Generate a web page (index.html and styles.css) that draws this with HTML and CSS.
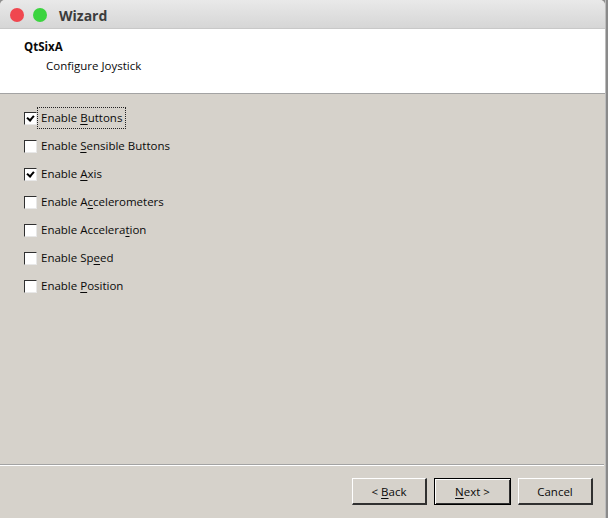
FILE: index.html
```html
<!DOCTYPE html>
<html>
<head>
<meta charset="utf-8">
<link rel="stylesheet" href="styles.css">
</head>
<body>
<div class="screen">
  <div class="window">
    <div class="titlebar">
      <span class="dot red"></span>
      <span class="dot green"></span>
      <span class="title">Wizard</span>
    </div>
    <div class="header">
      <div class="h-title">QtSixA</div>
      <div class="h-sub">Configure Joystick</div>
    </div>
    <div class="content">
      <div class="options">
        <label class="opt"><span class="box checked"></span><span class="lbl focus">Enable <u>B</u>uttons</span></label>
        <label class="opt"><span class="box"></span><span class="lbl">Enable <u>S</u>ensible Buttons</span></label>
        <label class="opt"><span class="box checked"></span><span class="lbl">Enable <u>A</u>xis</span></label>
        <label class="opt"><span class="box"></span><span class="lbl">Enable A<u>c</u>celerometers</span></label>
        <label class="opt"><span class="box"></span><span class="lbl">Enable Accelera<u>t</u>ion</span></label>
        <label class="opt"><span class="box"></span><span class="lbl">Enable Sp<u>e</u>ed</span></label>
        <label class="opt"><span class="box"></span><span class="lbl">Enable <u>P</u>osition</span></label>
      </div>
      <div class="sep"></div>
      <div class="buttons">
        <button class="btn">&lt; <u>B</u>ack</button>
        <button class="btn default"><u>N</u>ext &gt;</button>
        <button class="btn">Cancel</button>
      </div>
    </div>
  </div>
  <div class="desk"></div>
</div>
</body>
</html>
```
FILE: styles.css
```css
html, body {
  margin: 0;
  padding: 0;
  width: 608px;
  height: 518px;
  overflow: hidden;
  background: #8e8e8e;
}
.screen {
  display: flex;
  width: 608px;
  height: 518px;
}
.window {
  width: 605px;
  height: 518px;
  display: flex;
  flex-direction: column;
  background: #d6d2cb;
  font-family: "Open Sans", "Noto Sans", sans-serif;
  font-size: 11.5px;
  color: #0a0a0a;
  border-radius: 5px 5px 0 0;
  overflow: hidden;
}
.desk {
  flex: 1;
  background: linear-gradient(to right, #bdbdbd 0, #bdbdbd 1px, #8a8a8a 1px, #8a8a8a 100%);
}
.titlebar {
  height: 29px;
  flex: none;
  display: flex;
  align-items: center;
  padding-top: 2px;
  background: linear-gradient(#e9e9e9, #d6d6d6);
  border-bottom: 1px solid #c8c8c8;
  box-sizing: border-box;
}
.dot {
  width: 14px;
  height: 14px;
  border-radius: 50%;
  margin-left: 10px;
}
.dot.red { background: #f0474f; }
.dot.green { background: #3bd43f; margin-left: 9px; }
.title {
  margin-left: 12px;
  font-family: "Open Sans", sans-serif;
  font-weight: bold;
  font-size: 14px;
  color: #3c3c3c;
}
.header {
  height: 65px;
  flex: none;
  background: #ffffff;
  border-bottom: 1px solid #a3a3a3;
  box-sizing: border-box;
  padding: 10px 0 0 24px;
}
.h-title {
  font-weight: bold;
  line-height: 16px;
}
.h-sub {
  margin-left: 22px;
  margin-top: 3px;
  line-height: 16px;
}
.content {
  flex: 1;
  display: flex;
  flex-direction: column;
}
.options {
  flex: 1;
  display: flex;
  flex-direction: column;
  padding: 13px 0 0 24px;
  gap: 6px;
}
.opt {
  display: flex;
  align-items: center;
  height: 22px;
}
.box {
  width: 13px;
  height: 13px;
  box-sizing: border-box;
  background: #fff;
  border-top: 1px solid #303030;
  border-left: 1px solid #303030;
  border-right: 1px solid #e8e8e8;
  border-bottom: 1px solid #e8e8e8;
  position: relative;
}
.box.checked::after {
  content: "";
  position: absolute;
  left: 3px;
  top: 1px;
  width: 3px;
  height: 5px;
  border-right: 2px solid #000;
  border-bottom: 2px solid #000;
  transform: rotate(40deg);
}
.lbl {
  margin-left: 0;
  padding: 2px 3px;
  line-height: 16px;
  border: 1px dotted transparent;
}
.lbl.focus {
  border-color: #222;
}
u {
  text-decoration: underline;
  text-underline-offset: 2px;
}
.sep {
  height: 1px;
  background: #a3a3a3;
  border-bottom: 1px solid #ffffff;
  margin-right: 1px;
}
.buttons {
  height: 52px;
  flex: none;
  display: flex;
  justify-content: flex-end;
  align-items: flex-start;
  padding: 12px 12px 0 0;
  box-sizing: border-box;
  gap: 7px;
}
.btn {
  width: 75px;
  height: 27px;
  box-sizing: border-box;
  background: #d6d2cb;
  font-family: "Open Sans", "Noto Sans", sans-serif;
  font-size: 11.5px;
  color: #0a0a0a;
  border-top: 1px solid #ffffff;
  border-left: 1px solid #ffffff;
  border-right: 2px solid #303030;
  border-bottom: 2px solid #303030;
  padding: 0;
}
.btn.default {
  width: 77px;
  border: 1px solid #000;
  box-shadow: inset 1px 1px 0 #ffffff, inset -1px -1px 0 #303030;
}
```
